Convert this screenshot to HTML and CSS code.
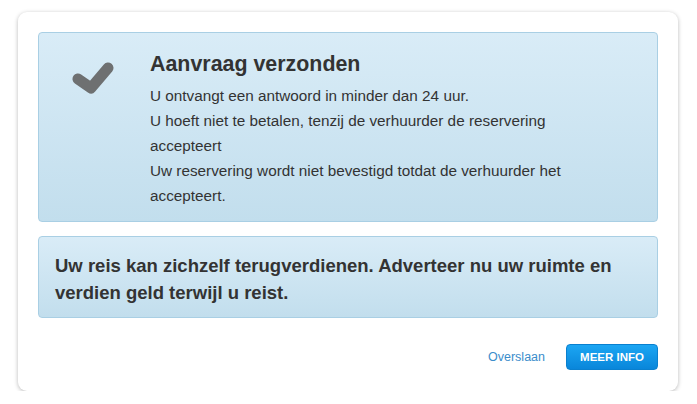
FILE: index.html
```html
<!DOCTYPE html>
<html lang="nl">
<head>
    <meta charset="UTF-8">
    <meta name="viewport" content="width=device-width, initial-scale=1.0">
    <title>Aanvraag verzonden</title>
    <link rel="stylesheet" href="styles.css">
</head>
<body>

    <div class="card">
        <div class="alert alert-sent">
            <svg class="check" width="42" height="32" viewBox="0 0 42 32">
                <path d="M6 17 L19 26 L36 6" fill="none" stroke="#6e7071" stroke-width="11" stroke-linecap="round" stroke-linejoin="round"/>
            </svg>
            <div class="sent-text">
                <h2>Aanvraag verzonden</h2>
                <p>U ontvangt een antwoord in minder dan 24 uur.</p>
                <p>U hoeft niet te betalen, tenzij de verhuurder de reservering accepteert</p>
                <p>Uw reservering wordt niet bevestigd totdat de verhuurder het accepteert.</p>
            </div>
        </div>

        <div class="alert alert-promo">
            <p>Uw reis kan zichzelf terugverdienen. Adverteer nu uw ruimte en verdien geld terwijl u reist.</p>
        </div>

        <div class="footer">
            <a href="#" class="skip">Overslaan</a>
            <button class="btn-info">MEER INFO</button>
        </div>
    </div>

</body>
</html>
```

FILE: styles.css
```css
body {
    font-family: "Liberation Sans", Arial, sans-serif;
    background-color: #fff;
    color: #333;
    margin: 0;
    padding: 12px 19px 0 18px;
}
.card {
    width: 620px;
    padding: 20px 20px 21px;
    background: white;
    border-radius: 9px;
    box-shadow: 0 1px 4px rgba(0, 0, 0, 0.28);
}
.alert {
    border: 1px solid #a9cfe4;
    border-radius: 4px;
    background: linear-gradient(#d9ecf7, #c2deed);
}
.alert-sent {
    display: flex;
    align-items: flex-start;
    padding: 18px 60px 13px 33px;
    height: 157px;
}
.check {
    flex: none;
    margin-top: 11px;
    margin-right: 36px;
}
.sent-text h2 {
    margin: 0 0 6px;
    font-size: 21.4px;
    line-height: 26px;
    font-weight: bold;
}
.sent-text p {
    margin: 0;
    font-size: 15.3px;
    line-height: 25px;
}
.alert-promo {
    margin-top: 14px;
    padding: 15px 16px 11px;
}
.alert-promo p {
    margin: 0;
    font-size: 18.5px;
    line-height: 27px;
    font-weight: bold;
}
.footer {
    display: flex;
    justify-content: flex-end;
    align-items: center;
    margin-top: 26px;
    gap: 21px;
}
.skip {
    color: #3b8dcb;
    font-size: 12.5px;
    text-decoration: none;
}
.btn-info {
    width: 92px;
    height: 26px;
    padding: 0;
    border: 1px solid #0a80cf;
    border-radius: 4px;
    background: linear-gradient(#1ca6f3, #0986da);
    color: white;
    font-family: "Liberation Sans", Arial, sans-serif;
    font-size: 11.5px;
    font-weight: bold;
    cursor: pointer;
}
```
